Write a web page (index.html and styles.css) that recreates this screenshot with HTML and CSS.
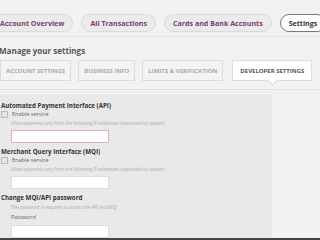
FILE: index.html
```html
<!DOCTYPE html>
<html lang="en">
<head>
    <meta charset="UTF-8">
    <meta name="viewport" content="width=device-width, initial-scale=1.0">
    <title>Settings</title>
    <link rel="stylesheet" href="styles.css">
</head>
<body>
    <nav class="main-tabs">
        <a class="pill">Account Overview</a>
        <a class="pill">All Transactions</a>
        <a class="pill">Cards and Bank Accounts</a>
        <a class="pill active">Settings</a>
    </nav>

    <h2 class="page-title">Manage your settings</h2>

    <div class="sub-tabs">
        <a class="sub-tab">Account Settings</a>
        <a class="sub-tab">Business Info</a>
        <a class="sub-tab">Limits &amp; Verification</a>
        <a class="sub-tab active">Developer Settings</a>
    </div>

    <div class="content">
        <section class="dev-panel">
            <h3>Automated Payment Interface (API)</h3>
            <label class="check"><span class="box"></span>Enable service</label>
            <p class="hint">Allow payments only from the following IP addresses (separated by spaces)</p>
            <input class="field focused" type="text">

            <h3>Merchant Query Interface (MQI)</h3>
            <label class="check"><span class="box"></span>Enable service</label>
            <p class="hint">Allow payments only from the following IP addresses (separated by spaces)</p>
            <input class="field" type="text">

            <h3 class="spaced">Change MQI/API password</h3>
            <p class="hint">The password is required to access the API and MQI</p>
            <label class="field-label">Password</label>
            <input class="field" type="password">
        </section>
    </div>

    <div class="bottom-bar"></div>
</body>
</html>
```

FILE: styles.css
```css
body {
    margin: 0;
    background-color: #f2f2f2;
    font-family: "Open Sans", Arial, sans-serif;
    color: #444;
    overflow: hidden;
}
.main-tabs {
    display: flex;
    gap: 8px;
    padding-top: 14px;
    margin-left: -9px;
    padding-bottom: 4px;
    border-bottom: 1px solid #e6e6e6;
    white-space: nowrap;
}
.pill {
    display: flex;
    align-items: center;
    height: 16px;
    padding: 0 8px;
    border: 1px solid #dadada;
    border-radius: 9px;
    background-color: #ebebeb;
    color: #7b3d6d;
    font-size: 7.1px;
    font-weight: 700;
}
.pill.active {
    background-color: #fff;
    border-color: #777;
    color: #333;
}
.page-title {
    margin: 8px 0 0 -1px;
    font-size: 8px;
    font-weight: 700;
    color: #555;
}
.sub-tabs {
    display: flex;
    gap: 7px;
    margin-top: 4px;
    padding-bottom: 8px;
    border-bottom: 1px solid #e4e4e4;
}
.sub-tab {
    position: relative;
    display: flex;
    align-items: center;
    height: 19px;
    padding: 0 5px;
    border: 1px solid #dcdcdc;
    background-color: #f3f3f3;
    color: #aaa;
    font-size: 6px;
    font-weight: 700;
    text-transform: uppercase;
    white-space: nowrap;
}
.sub-tab.active {
    margin-left: 2px;
    padding: 0 7px;
    background-color: #fff;
    color: #555;
}
.sub-tab.active::after {
    content: "";
    position: absolute;
    left: 50%;
    bottom: -4px;
    width: 6px;
    height: 6px;
    margin-left: -3px;
    background-color: #fff;
    border-right: 1px solid #dcdcdc;
    border-bottom: 1px solid #dcdcdc;
    transform: rotate(45deg);
}
.content {
    padding-top: 3px;
}
.dev-panel {
    width: 270px;
    min-height: 160px;
    padding: 7px 0 0 1px;
    background-color: #e9e9e9;
    border-top: 1px solid #f7f7f7;
    box-shadow: 1px 0 2px rgba(0,0,0,0.05);
}
.dev-panel h3 {
    margin: 0;
    font-size: 6.2px;
    font-weight: 700;
    color: #333;
    line-height: 9px;
}
.dev-panel h3.spaced {
    margin-top: 1px;
}
.check {
    display: flex;
    align-items: center;
    gap: 4px;
    margin-top: 0;
    font-size: 5.5px;
    color: #666;
}
.box {
    width: 5px;
    height: 5px;
    border: 1px solid #bbb;
    background-color: #e4e4e4;
}
.hint {
    margin: 2px 0 0 10px;
    font-size: 4.4px;
    color: #aaa;
}
.field {
    display: block;
    box-sizing: border-box;
    width: 98px;
    height: 13px;
    margin: 4px 0 4px 10px;
    padding: 0;
    border: 1px solid #dddddd;
    background-color: #fff;
}
.field.focused {
    border-color: #d7afc6;
}
.field-label {
    display: block;
    margin: 3px 0 0 10px;
    font-size: 5.5px;
    color: #666;
}
.bottom-bar {
    position: fixed;
    left: 0;
    right: 0;
    bottom: 0;
    height: 2px;
    background-color: #444;
}
```
